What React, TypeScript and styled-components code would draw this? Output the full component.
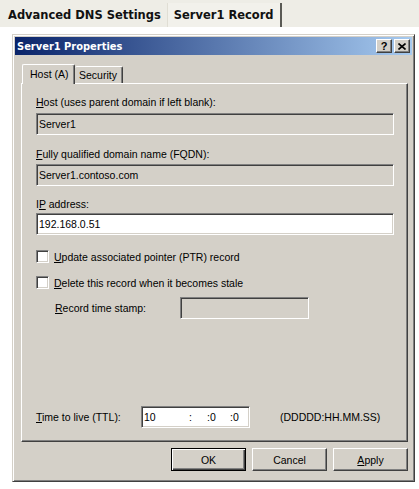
import React from "react";
import styled, { createGlobalStyle, css } from "styled-components";

const UI = `"Liberation Sans", Arial, sans-serif`;
const BOLD = `"DejaVu Sans Condensed", "DejaVu Sans", Verdana, sans-serif`;
const FACE = "#d4d0c8";

const Global = createGlobalStyle`
  html, body { margin: 0; padding: 0; background: #fff; }
  body { font-family: ${UI}; font-size: 10.5px; color: #000; }
  * { box-sizing: border-box; }
`;

const Page = styled.div`
  width: 419px;
  height: 489px;
  background: #fff;
  overflow: hidden;
`;

const TopStrip = styled.div`
  display: flex;
  align-items: stretch;
  height: 27px;
  padding-top: 3px;
  background: #eeede6;
`;

const TopTab = styled.div<{ $active?: boolean }>`
  display: flex;
  align-items: center;
  padding: 0 6px 2px 8px;
  font-family: ${BOLD};
  font-stretch: condensed;
  font-weight: bold;
  font-size: 12.75px;
  color: #111;
  ${(p) =>
    p.$active &&
    css`
      padding-left: 6px;
      padding-right: 6px;
      background: #f2f1eb;
      border-left: 1px solid #e0ded4;
      border-right: 2px solid #5a5a55;
    `}
`;

const Window = styled.div`
  margin: 7px 0 0 12px;
  width: 403px;
  height: 448px;
  display: flex;
  flex-direction: column;
  padding: 2px;
  background: ${FACE};
  border: 1px solid;
  border-color: ${FACE} #404040 #404040 ${FACE};
  box-shadow: inset 1px 1px #fff, inset -1px -1px #808080;
`;

const TitleBar = styled.div`
  flex: none;
  height: 18px;
  display: flex;
  align-items: center;
  justify-content: space-between;
  padding: 0 2px;
  background: linear-gradient(to right, #0a246a, #a6caf0);
`;

const Title = styled.span`
  color: #fff;
  font-family: ${BOLD};
  font-stretch: condensed;
  font-weight: bold;
  font-size: 11px;
`;

const CapButtons = styled.div`
  display: flex;
  gap: 2px;
`;

const CapButton = styled.div`
  width: 16px;
  height: 14px;
  display: flex;
  align-items: center;
  justify-content: center;
  background: ${FACE};
  border: 1px solid;
  border-color: #fff #404040 #404040 #fff;
  box-shadow: inset -1px -1px #808080;
  font-weight: bold;
  font-size: 11px;
  line-height: 1;
`;

const Body = styled.div`
  flex: 1;
  display: flex;
  flex-direction: column;
  padding: 9px 4px 0 6px;
`;

const TabRow = styled.div`
  display: flex;
  align-items: flex-end;
  height: 19px;
  padding-left: 1px;
`;

const Tab = styled.div<{ $active?: boolean; $w: number }>`
  position: relative;
  flex: none;
  width: ${(p) => p.$w}px;
  display: flex;
  align-items: center;
  background: ${FACE};
  border-top: 1px solid #fff;
  border-left: 1px solid #fff;
  border-right: 1px solid #404040;
  box-shadow: inset -1px 0 #808080;
  border-radius: 2px 2px 0 0;
  white-space: nowrap;
  ${(p) =>
    p.$active
      ? css`
          height: 20px;
          margin-bottom: -1px;
          z-index: 1;
          padding: 0 0 2px 7px;
        `
      : css`
          height: 17px;
          padding: 0 0 0 4px;
          border-left: none;
        `}
`;

const Panel = styled.div`
  width: 387px;
  height: 359px;
  display: flex;
  flex-direction: column;
  padding: 12px 13px 13px 14px;
  border: 1px solid;
  border-color: #fff #404040 #404040 #fff;
  box-shadow: inset -1px -1px #808080;
`;

const Label = styled.div<{ $mt?: number }>`
  height: 13px;
  line-height: 13px;
  margin-top: ${(p) => p.$mt ?? 0}px;
  white-space: nowrap;
`;

const Key = styled.span`
  text-decoration: underline;
`;

const TextBox = styled.div<{ $mt?: number; $disabled?: boolean; $w?: number }>`
  height: 22px;
  width: ${(p) => (p.$w ? `${p.$w}px` : "100%")};
  margin-top: ${(p) => p.$mt ?? 0}px;
  display: flex;
  align-items: center;
  padding: 0 2px 1px;
  background: ${(p) => (p.$disabled ? FACE : "#fff")};
  border: 1px solid;
  border-color: #808080 #fff #fff #808080;
  box-shadow: inset 1px 1px #404040, inset -1px -1px ${FACE};
  white-space: nowrap;
`;

const CheckRow = styled.div<{ $mt: number }>`
  display: flex;
  align-items: center;
  height: 13px;
  margin-top: ${(p) => p.$mt}px;
`;

const CheckBox = styled.span`
  flex: none;
  width: 13px;
  height: 13px;
  margin-right: 5px;
  background: #fff;
  border: 1px solid;
  border-color: #808080 #fff #fff #808080;
  box-shadow: inset 1px 1px #404040, inset -1px -1px ${FACE};
`;

const InlineRow = styled.div<{ $mt?: number; $indent?: number }>`
  display: flex;
  align-items: center;
  height: 22px;
  margin-top: ${(p) => (p.$mt === undefined ? "auto" : `${p.$mt}px`)};
  padding-left: ${(p) => p.$indent ?? 0}px;
`;

const RowLabel = styled.span<{ $w: number }>`
  flex: none;
  width: ${(p) => p.$w}px;
  white-space: nowrap;
`;

const Segment = styled.span<{ $w?: number }>`
  flex: none;
  width: ${(p) => (p.$w ? `${p.$w}px` : "auto")};
`;

const Format = styled.span`
  margin-left: 30px;
  white-space: nowrap;
`;

const ButtonRow = styled.div`
  display: flex;
  justify-content: flex-end;
  gap: 6px;
  margin-top: 6px;
`;

const Button = styled.div<{ $default?: boolean }>`
  width: 75px;
  height: 23px;
  display: flex;
  align-items: center;
  justify-content: center;
  background: ${FACE};
  border: 1px solid;
  ${(p) =>
    p.$default
      ? css`
          border-color: #000;
          box-shadow: inset 1px 1px #fff, inset -1px -1px #404040, inset -2px -2px #808080;
        `
      : css`
          border-color: #fff #404040 #404040 #fff;
          box-shadow: inset -1px -1px #808080;
        `}
`;

const CloseGlyph = () => (
  <svg width="8" height="7" viewBox="0 0 8 7">
    <path d="M0.5 0.5 L7.5 6.5 M7.5 0.5 L0.5 6.5" stroke="#000" strokeWidth="1.6" fill="none" />
  </svg>
);

export default function App() {
  return (
    <Page>
      <Global />
      <TopStrip>
        <TopTab>Advanced DNS Settings</TopTab>
        <TopTab $active>Server1 Record</TopTab>
      </TopStrip>
      <Window>
        <TitleBar>
          <Title>Server1 Properties</Title>
          <CapButtons>
            <CapButton>?</CapButton>
            <CapButton>
              <CloseGlyph />
            </CapButton>
          </CapButtons>
        </TitleBar>
        <Body>
          <TabRow>
            <Tab $active $w={53}>Host (A)</Tab>
            <Tab $w={48}>Security</Tab>
          </TabRow>
          <Panel>
            <Label>
              <Key>H</Key>ost (uses parent domain if left blank):
            </Label>
            <TextBox $mt={4} $disabled>
              Server1
            </TextBox>
            <Label $mt={13}>
              <Key>F</Key>ully qualified domain name (FQDN):
            </Label>
            <TextBox $mt={3} $disabled>
              Server1.contoso.com
            </TextBox>
            <Label $mt={12}>
              I<Key>P</Key> address:
            </Label>
            <TextBox $mt={2}>192.168.0.51</TextBox>
            <CheckRow $mt={15}>
              <CheckBox />
              <span>
                <Key>U</Key>pdate associated pointer (PTR) record
              </span>
            </CheckRow>
            <CheckRow $mt={13}>
              <CheckBox />
              <span>
                <Key>D</Key>elete this record when it becomes stale
              </span>
            </CheckRow>
            <InlineRow $mt={8} $indent={19}>
              <RowLabel $w={125}>
                <Key>R</Key>ecord time stamp:
              </RowLabel>
              <TextBox $w={129} $disabled />
            </InlineRow>
            <InlineRow>
              <RowLabel $w={105}>
                <Key>T</Key>ime to live (TTL):
              </RowLabel>
              <TextBox $w={109}>
                <Segment $w={45}>10</Segment>
                <Segment $w={18}>:</Segment>
                <Segment $w={23}>:0</Segment>
                <Segment>:0</Segment>
              </TextBox>
              <Format>(DDDDD:HH.MM.SS)</Format>
            </InlineRow>
          </Panel>
          <ButtonRow>
            <Button $default>OK</Button>
            <Button>Cancel</Button>
            <Button>
              <span>
                <Key>A</Key>pply
              </span>
            </Button>
          </ButtonRow>
        </Body>
      </Window>
    </Page>
  );
}
